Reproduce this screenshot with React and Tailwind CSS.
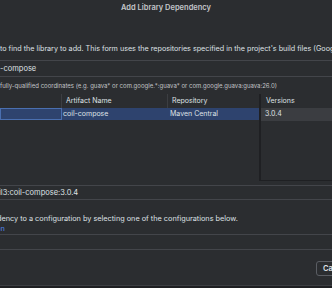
export default function App() {
  return (
    <div
      className="w-[332px] h-[288px] overflow-hidden bg-[#2b2d30] text-[#dfe1e5] flex flex-col"
      style={{ fontFamily: 'Inter, "Noto Sans", sans-serif' }}
    >
      {/* title bar */}
      <div className="h-[15px] flex items-center justify-center text-[7.5px] font-semibold text-[#c4c6ca]">
        Add Library Dependency
      </div>

      {/* description */}
      <div className="mt-[29px] h-[10px] leading-[10px] text-[7.2px] whitespace-nowrap">
        to find the library to add. This form uses the repositories specified in the project's build files (Google
      </div>

      {/* search field */}
      <div className="mt-[6px] h-[17px] border-y border-[#43454a] flex items-center text-[7.5px] whitespace-nowrap">
        -compose
      </div>

      {/* hint */}
      <div className="mt-[4px] h-[10px] leading-[10px] text-[6px] text-[#c2c4c8] whitespace-nowrap">
        fully-qualified coordinates (e.g. guava* or com.google.*:guava* or com.google.guava:guava:26.0)
      </div>

      {/* tables */}
      <div className="mt-[3px] h-[87px] flex">
        <div className="w-[259px] flex flex-col">
          <div className="h-[14px] flex text-[7px] items-center">
            <div className="w-[62px] h-full border-r border-[#3c3e42]"></div>
            <div className="w-[106px] h-full border-r border-[#3c3e42] pl-[4px] flex items-center">Artifact Name</div>
            <div className="flex-1 pl-[4px] flex items-center">Repository</div>
          </div>
          <div className="h-[12px] flex text-[7px] items-center bg-[#2e436e]">
            <div className="w-[62px] h-full border border-[#4a6fb0]"></div>
            <div className="w-[106px] pl-[1px] whitespace-nowrap">coil-compose</div>
            <div className="flex-1 pl-[2px] whitespace-nowrap">Maven Central</div>
          </div>
        </div>
        <div className="flex-1 border-l-[2px] border-b border-[#1f2023] flex flex-col">
          <div className="h-[14px] pl-[5px] flex items-center text-[7px]">Versions</div>
          <div className="h-[13px] pl-[4px] flex items-center text-[7px] bg-[#3b3d41]">3.0.4</div>
        </div>
      </div>

      {/* coordinate field */}
      <div className="mt-[4px] h-[15px] border-y border-[#43454a] flex items-center text-[7.5px] whitespace-nowrap">
        <span className="-ml-[1px]">il3:coil-compose:3.0.4</span>
      </div>

      {/* configuration */}
      <div className="mt-[14px] h-[10px] leading-[10px] text-[7.3px] whitespace-nowrap">
        <span className="-ml-[3px]">dency to a configuration by selecting one of the configurations below.</span>
      </div>
      <div className="h-[9px] leading-[9px] text-[7.3px] text-[#548af7] whitespace-nowrap">
        <span className="-ml-[4px]">on</span>
      </div>

      {/* configuration field */}
      <div className="mt-[1px] h-[16px] border-y border-[#43454a]"></div>

      {/* buttons */}
      <div className="mt-[11px] h-[15px] flex justify-end">
        <div className="w-[40px] h-[15px] -mr-[24px] border border-[#5a5d63] rounded-[3px] pl-[6px] flex items-center text-[7.5px] font-semibold">
          Cancel
        </div>
      </div>

      <div className="mt-auto h-[3px] border-t border-[#3c3e42] bg-[#1e1f22]"></div>
    </div>
  );
}
